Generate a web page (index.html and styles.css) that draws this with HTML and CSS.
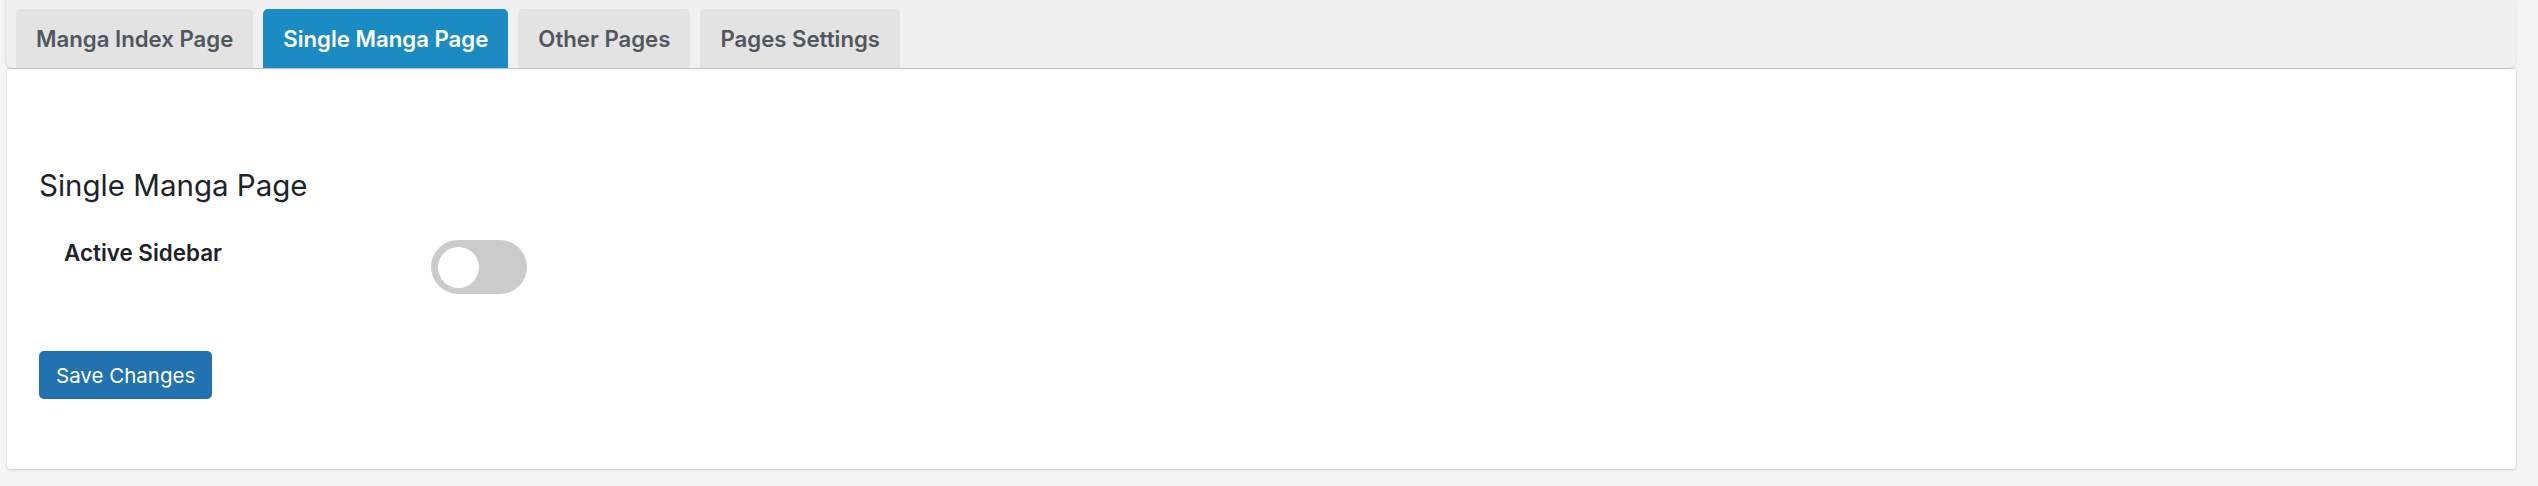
FILE: index.html
```html
<!DOCTYPE html>
<html lang="en">
<head>
    <meta charset="UTF-8">
    <meta name="viewport" content="width=device-width, initial-scale=1.0">
    <title>Manga Settings</title>
    <link rel="stylesheet" href="styles.css">
</head>
<body>
    <div class="wrap">
        <nav class="tab-bar">
            <a class="nav-tab" href="#">Manga Index Page</a>
            <a class="nav-tab active" href="#">Single Manga Page</a>
            <a class="nav-tab" href="#">Other Pages</a>
            <a class="nav-tab" href="#">Pages Settings</a>
        </nav>

        <div class="panel">
            <h2>Single Manga Page</h2>
            <form id="settingsForm">
                <div class="form-row">
                    <label class="field-label" for="activeSidebar">Active Sidebar</label>
                    <label class="switch">
                        <input type="checkbox" id="activeSidebar">
                        <span class="slider"></span>
                    </label>
                </div>
                <button type="submit">Save Changes</button>
            </form>
        </div>
    </div>
</body>
</html>
```

FILE: styles.css
```css
body {
    margin: 0;
    background-color: #f5f5f5;
    font-family: Inter, "Noto Sans", sans-serif;
    color: #1d2327;
}

.wrap {
    padding: 0 22px 16px 5px;
}

.tab-bar {
    display: flex;
    gap: 10px;
    height: 59px;
    padding: 9px 10px 0;
    background-color: #f0f0f0;
    border-left: 1px solid #e2e2e2;
    border-radius: 0 0 8px 8px;
    box-shadow: 0 1px 2px rgba(0, 0, 0, 0.12);
    position: relative;
    z-index: 1;
}

.nav-tab {
    display: block;
    padding: 0 20px;
    line-height: 59px;
    font-size: 22.2px;
    font-weight: 600;
    color: #50575e;
    text-decoration: none;
    background-color: #e3e3e3;
    border-radius: 5px 5px 0 0;
}

.nav-tab.active {
    background-color: #1b8bc3;
    color: #fff;
}

.panel {
    margin-left: 2px;
    height: 401px;
    box-sizing: border-box;
    padding: 97px 32px 0;
    background-color: #fff;
    border-top: 1px solid #d6d6d6;
    box-shadow: 0 1px 3px rgba(0, 0, 0, 0.18);
    border-radius: 0 0 4px 4px;
}

h2 {
    margin: 0;
    font-size: 29.5px;
    font-weight: 400;
    line-height: 38px;
    color: #1d2327;
}

.form-row {
    display: flex;
    align-items: flex-start;
    margin-top: 32px;
}

.field-label {
    width: 392px;
    padding-left: 25px;
    box-sizing: border-box;
    font-size: 22.4px;
    font-weight: 600;
    line-height: 34px;
}

.switch {
    position: relative;
    display: block;
    width: 96px;
    height: 54px;
    margin-top: 4px;
}

.switch input {
    opacity: 0;
    width: 0;
    height: 0;
}

.slider {
    position: absolute;
    inset: 0;
    background-color: #cbcbcb;
    border-radius: 27px;
    cursor: pointer;
}

.slider::before {
    content: "";
    position: absolute;
    left: 7px;
    top: 7px;
    width: 41px;
    height: 41px;
    background-color: #fff;
    border-radius: 50%;
}

button {
    display: block;
    margin-top: 57px;
    height: 48px;
    padding: 0 17px;
    font-family: Inter, "Noto Sans", sans-serif;
    font-size: 20.5px;
    color: #fff;
    background-color: #2271b1;
    border: 0;
    border-radius: 5px;
    cursor: pointer;
}
```
